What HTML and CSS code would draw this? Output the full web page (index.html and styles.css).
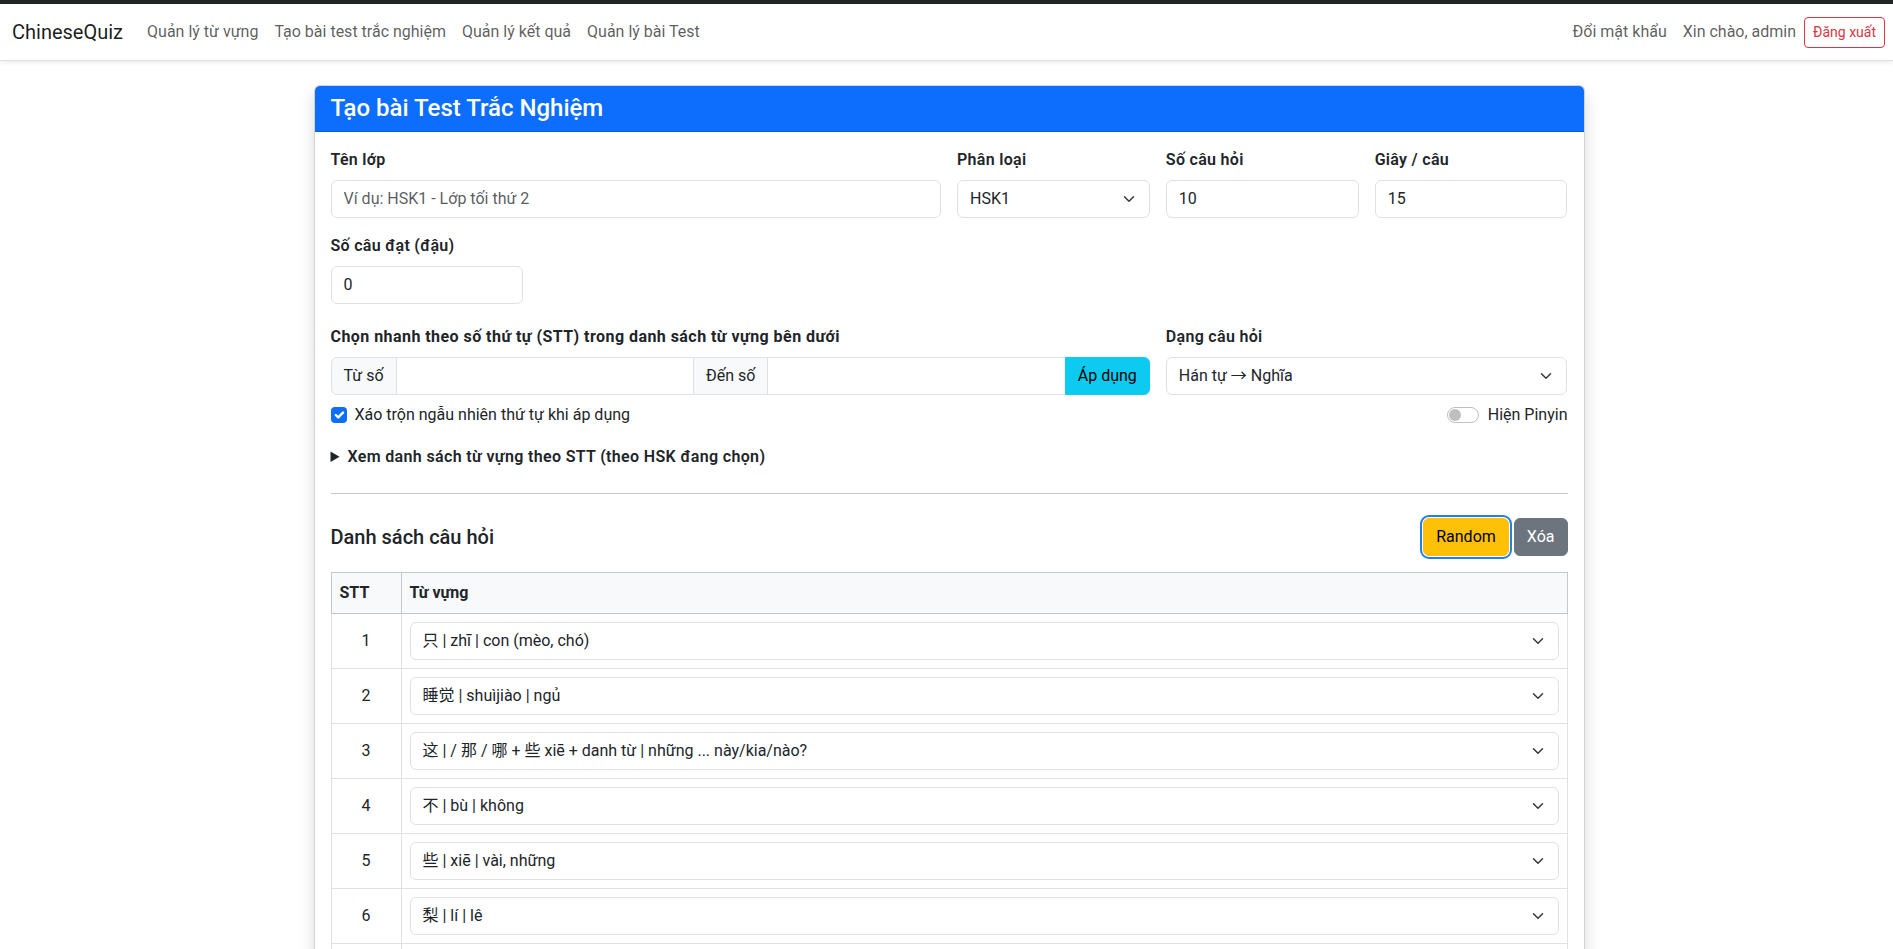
FILE: index.html
```html
<!DOCTYPE html>
<html lang="vi">
<head>
<meta charset="utf-8">
<title>ChineseQuiz - Tạo bài test trắc nghiệm</title>
<link rel="stylesheet" href="styles.css">
</head>
<body>
<div class="topbar"></div>
<nav class="navbar">
  <div class="nav-left">
    <a class="brand" href="#">ChineseQuiz</a>
    <ul class="nav-links">
      <li><a class="nav-link" href="#">Quản lý từ vựng</a></li>
      <li><a class="nav-link" href="#">Tạo bài test trắc nghiệm</a></li>
      <li><a class="nav-link" href="#">Quản lý kết quả</a></li>
      <li><a class="nav-link" href="#">Quản lý bài Test</a></li>
    </ul>
  </div>
  <div class="nav-right">
    <a class="nav-link" href="#">Đổi mật khẩu</a>
    <span class="nav-text">Xin chào, admin</span>
    <button class="btn-logout" type="button">Đăng xuất</button>
  </div>
</nav>

<main class="container">
  <section class="card">
    <div class="card-header"><h4 class="card-title">Tạo bài Test Trắc Nghiệm</h4></div>
    <div class="card-body">
      <div class="grid">
        <div class="field span-6">
          <label class="form-label">Tên lớp</label>
          <input class="form-control" type="text" placeholder="Ví dụ: HSK1 - Lớp tối thứ 2">
        </div>
        <div class="field span-2">
          <label class="form-label">Phân loại</label>
          <div class="form-select"><span>HSK1</span><svg class="chev" width="16" height="12" viewBox="0 0 16 16"><path d="m2 5 6 6 6-6"/></svg></div>
        </div>
        <div class="field span-2">
          <label class="form-label">Số câu hỏi</label>
          <input class="form-control" type="text" value="10">
        </div>
        <div class="field span-2">
          <label class="form-label">Giây / câu</label>
          <input class="form-control" type="text" value="15">
        </div>
        <div class="field span-2 new-line">
          <label class="form-label">Số câu đạt (đậu)</label>
          <input class="form-control" type="text" value="0">
        </div>
      </div>

      <div class="grid quick-row">
        <div class="field span-8">
          <label class="form-label form-label-strong">Chọn nhanh theo số thứ tự (STT) trong danh sách từ vựng bên dưới</label>
          <div class="input-group">
            <span class="ig-text">Từ số</span>
            <input class="ig-input" type="text">
            <span class="ig-text">Đến số</span>
            <input class="ig-input" type="text">
            <button class="ig-btn" type="button">Áp dụng</button>
          </div>
          <div class="form-check">
            <span class="check"><svg width="16" height="16" viewBox="0 0 20 20"><path d="m6 10 3 3 6-6"/></svg></span>
            <span>Xáo trộn ngẫu nhiên thứ tự khi áp dụng</span>
          </div>
        </div>
        <div class="field span-4">
          <label class="form-label">Dạng câu hỏi</label>
          <div class="form-select"><span>Hán tự → Nghĩa</span><svg class="chev" width="16" height="12" viewBox="0 0 16 16"><path d="m2 5 6 6 6-6"/></svg></div>
          <div class="switch-row">
            <span class="switch"><span class="knob"></span></span>
            <span>Hiện Pinyin</span>
          </div>
        </div>
      </div>

      <details class="vocab-list">
        <summary>Xem danh sách từ vựng theo STT (theo HSK đang chọn)</summary>
      </details>

      <hr class="divider">

      <div class="list-head">
        <h5 class="list-title">Danh sách câu hỏi</h5>
        <div class="list-actions">
          <button class="btn btn-warning" type="button">Random</button>
          <button class="btn btn-secondary" type="button">Xóa</button>
        </div>
      </div>

      <table class="q-table">
        <thead>
          <tr><th class="stt">STT</th><th>Từ vựng</th></tr>
        </thead>
        <tbody>
          <tr><td class="stt">1</td><td><div class="form-select"><span>只 | zhī | con (mèo, chó)</span><svg class="chev" width="16" height="12" viewBox="0 0 16 16"><path d="m2 5 6 6 6-6"/></svg></div></td></tr>
          <tr><td class="stt">2</td><td><div class="form-select"><span>睡觉 | shuìjiào | ngủ</span><svg class="chev" width="16" height="12" viewBox="0 0 16 16"><path d="m2 5 6 6 6-6"/></svg></div></td></tr>
          <tr><td class="stt">3</td><td><div class="form-select"><span>这 | / 那 / 哪 + 些 xiē + danh từ | những ... này/kia/nào?</span><svg class="chev" width="16" height="12" viewBox="0 0 16 16"><path d="m2 5 6 6 6-6"/></svg></div></td></tr>
          <tr><td class="stt">4</td><td><div class="form-select"><span>不 | bù | không</span><svg class="chev" width="16" height="12" viewBox="0 0 16 16"><path d="m2 5 6 6 6-6"/></svg></div></td></tr>
          <tr><td class="stt">5</td><td><div class="form-select"><span>些 | xiē | vài, những</span><svg class="chev" width="16" height="12" viewBox="0 0 16 16"><path d="m2 5 6 6 6-6"/></svg></div></td></tr>
          <tr><td class="stt">6</td><td><div class="form-select"><span>梨 | lí | lê</span><svg class="chev" width="16" height="12" viewBox="0 0 16 16"><path d="m2 5 6 6 6-6"/></svg></div></td></tr>
          <tr><td class="stt">7</td><td><div class="form-select"><span>猫 | māo | mèo</span><svg class="chev" width="16" height="12" viewBox="0 0 16 16"><path d="m2 5 6 6 6-6"/></svg></div></td></tr>
          <tr><td class="stt">8</td><td><div class="form-select"><span>狗 | gǒu | chó</span><svg class="chev" width="16" height="12" viewBox="0 0 16 16"><path d="m2 5 6 6 6-6"/></svg></div></td></tr>
          <tr><td class="stt">9</td><td><div class="form-select"><span>喝 | hē | uống</span><svg class="chev" width="16" height="12" viewBox="0 0 16 16"><path d="m2 5 6 6 6-6"/></svg></div></td></tr>
          <tr><td class="stt">10</td><td><div class="form-select"><span>吃 | chī | ăn</span><svg class="chev" width="16" height="12" viewBox="0 0 16 16"><path d="m2 5 6 6 6-6"/></svg></div></td></tr>
        </tbody>
      </table>
    </div>
  </section>
</main>
</body>
</html>
```

FILE: styles.css
```css
* { box-sizing: border-box; }

body {
  margin: 0;
  font-family: Roboto, "Noto Sans CJK SC", sans-serif;
  font-size: 16px;
  line-height: 1.5;
  color: #212529;
  background: #fff;
}

.topbar {
  height: 4px;
  background: #222426;
}

/* Navbar */
.navbar {
  display: flex;
  justify-content: space-between;
  align-items: center;
  height: 57px;
  padding: 0 8px 0 12px;
  background: #fff;
  border-bottom: 1px solid #dee2e6;
  box-shadow: 0 .125rem .25rem rgba(0, 0, 0, .075);
}

.nav-left,
.nav-right {
  display: flex;
  align-items: center;
}

.brand {
  font-size: 20px;
  line-height: 30px;
  color: rgba(0, 0, 0, .9);
  text-decoration: none;
  margin-right: 16px;
}

.nav-links {
  display: flex;
  list-style: none;
  margin: 0;
  padding: 0;
}

.nav-link {
  display: block;
  padding: 8px;
  color: rgba(0, 0, 0, .65);
  text-decoration: none;
}

.nav-text {
  color: rgba(0, 0, 0, .65);
  margin: 0 8px 0 8px;
}

.btn-logout {
  font-family: inherit;
  font-size: 14px;
  line-height: 21px;
  padding: 4px 8px;
  border: 1px solid #dc3545;
  border-radius: 4px;
  background: transparent;
  color: #dc3545;
}

/* Page */
.container {
  max-width: 1276px;
  margin: 24px auto 0;
  padding-left: 5px;
}

.card {
  background: #fff;
  border: 1px solid rgba(0, 0, 0, .175);
  border-radius: 6px;
  box-shadow: 0 .5rem 1rem rgba(0, 0, 0, .15);
}

.card-header {
  background: #0d6efd;
  color: #fff;
  padding: 8px 16px;
  border-bottom: 1px solid rgba(0, 0, 0, .175);
  border-radius: 5px 5px 0 0;
}

.card-title {
  margin: 0;
  font-size: 24px;
  font-weight: 500;
  line-height: 1.2;
}

.card-body {
  padding: 16px;
}

/* Form grid */
.grid {
  display: grid;
  grid-template-columns: repeat(12, 1fr);
  column-gap: 16px;
  row-gap: 16px;
}

.span-2 { grid-column: span 2; }
.span-4 { grid-column: span 4; }
.span-6 { grid-column: span 6; }
.span-8 { grid-column: span 8; }
.new-line { grid-column: 1 / span 2; }

.quick-row {
  margin-top: 21px;
}

.form-label {
  display: block;
  margin-bottom: 8px;
  font-weight: 600;
  letter-spacing: .3px;
}

.form-label-strong {
  font-weight: 700;
  letter-spacing: .45px;
}

.form-control {
  display: block;
  width: 100%;
  height: 38px;
  padding: 6px 12px;
  font-family: inherit;
  font-size: 16px;
  line-height: 1.5;
  color: #212529;
  background: #fff;
  border: 1px solid #dee2e6;
  border-radius: 6px;
}

.form-control::placeholder {
  color: rgba(33, 37, 41, .75);
}

.form-select {
  display: flex;
  align-items: center;
  justify-content: space-between;
  height: 38px;
  padding: 6px 12px;
  background: #fff;
  border: 1px solid #dee2e6;
  border-radius: 6px;
  white-space: nowrap;
}

.chev {
  flex: none;
  fill: none;
  stroke: #343a40;
  stroke-width: 2;
  stroke-linecap: round;
  stroke-linejoin: round;
}

/* Input group */
.input-group {
  display: flex;
  height: 38px;
}

.ig-text {
  display: flex;
  align-items: center;
  padding: 6px 12px;
  background: #f8f9fa;
  border: 1px solid #dee2e6;
  white-space: nowrap;
}

.ig-text:first-child {
  border-radius: 6px 0 0 6px;
}

.ig-input {
  flex: 1 1 0;
  min-width: 0;
  font-family: inherit;
  font-size: 16px;
  padding: 6px 12px;
  border: 1px solid #dee2e6;
  margin: 0 -1px;
  background: #fff;
}

.ig-btn {
  font-family: inherit;
  font-size: 16px;
  line-height: 1.5;
  padding: 6px 12px;
  background: #0dcaf0;
  border: 1px solid #0dcaf0;
  color: #000;
  border-radius: 0 6px 6px 0;
}

/* Checks */
.form-check {
  display: flex;
  align-items: center;
  gap: 8px;
  margin-top: 8px;
  margin-bottom: 2px;
}

.check {
  display: flex;
  width: 16px;
  height: 16px;
  background: #0d6efd;
  border-radius: 4px;
}

.check path {
  fill: none;
  stroke: #fff;
  stroke-width: 3;
  stroke-linecap: round;
  stroke-linejoin: round;
}

.switch-row {
  display: flex;
  justify-content: flex-end;
  align-items: center;
  gap: 9px;
  margin-top: 8px;
}

.switch {
  display: flex;
  align-items: center;
  width: 32px;
  height: 16px;
  padding: 0 1px;
  border: 1px solid rgba(0, 0, 0, .25);
  border-radius: 8px;
}

.knob {
  width: 12px;
  height: 12px;
  border-radius: 50%;
  background: #bfbfbf;
}

/* Details */
.vocab-list {
  margin-top: 16px;
}

.vocab-list summary {
  font-weight: 600;
  letter-spacing: .35px;
  cursor: pointer;
}

.divider {
  margin: 24px 0;
  border: 0;
  border-top: 1px solid #212529;
  opacity: .25;
}

/* Question list */
.list-head {
  display: flex;
  justify-content: space-between;
  align-items: center;
  margin-bottom: 16px;
}

.list-title {
  margin: 0;
  font-size: 20px;
  font-weight: 500;
  line-height: 1.2;
}

.list-actions {
  display: flex;
  gap: 5px;
}

.btn {
  font-family: inherit;
  font-size: 16px;
  line-height: 1.5;
  padding: 6px 12px;
  border: 1px solid transparent;
  border-radius: 6px;
}

.btn-warning {
  background: #ffc107;
  border-color: #ffc107;
  color: #000;
  outline: 2px solid #1f7fec;
  outline-offset: 1px;
}

.btn-secondary {
  background: #6c757d;
  border-color: #6c757d;
  color: #fff;
}

.q-table {
  width: 100%;
  border-collapse: collapse;
}

.q-table th {
  background: #f8f9fa;
  border: 1px solid #c6c7c8;
  padding: 8px;
  text-align: left;
  font-weight: 700;
}

.q-table th.stt {
  width: 70px;
}

.q-table td {
  border: 1px solid #dee2e6;
  padding: 8px;
  vertical-align: middle;
}

.q-table td.stt {
  text-align: center;
}
```
